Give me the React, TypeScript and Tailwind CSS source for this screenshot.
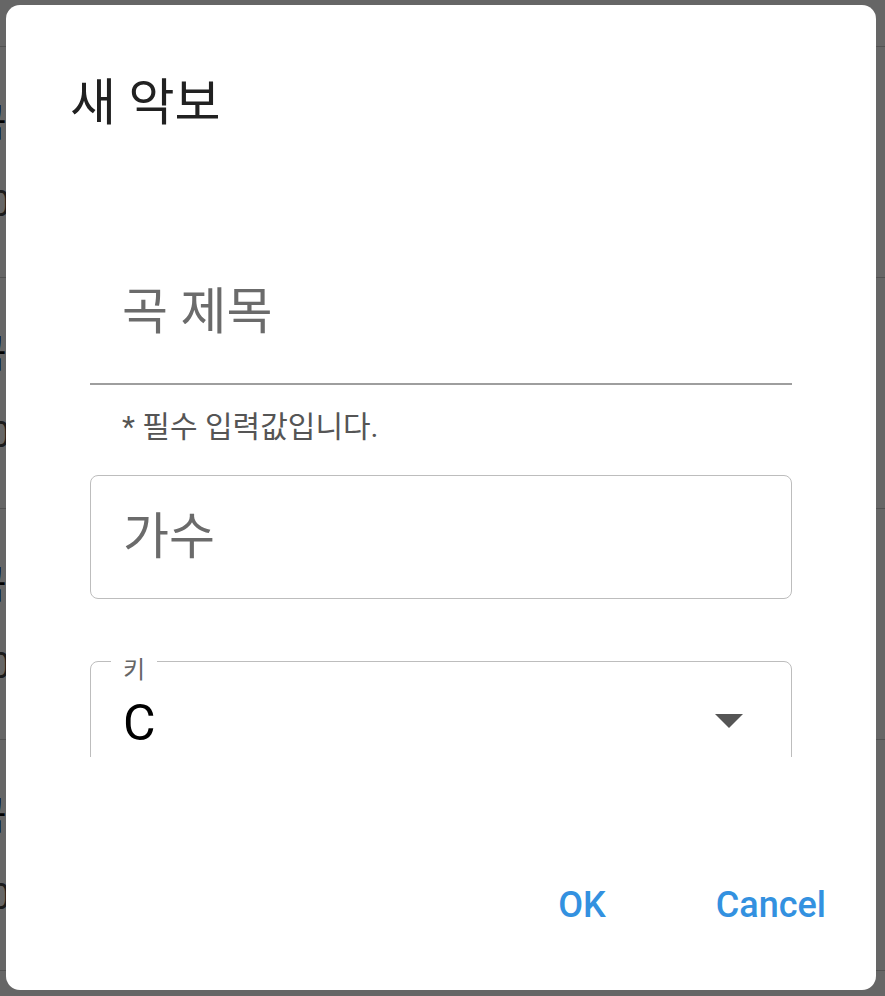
import { useState } from "react";

const font = { fontFamily: 'Roboto, "Noto Sans CJK KR", sans-serif' };

function BackgroundList() {
  const rows = ["곡 제목 1", "곡 제목 2", "곡 제목 3", "곡 제목 4"];
  return (
    <div className="flex flex-col bg-white" style={font}>
      <div className="h-[47px] border-b border-[#ccc]" />
      {rows.map((r, i) => (
        <div key={r} className="h-[231px] border-b border-[#ccc] flex flex-col justify-center gap-6 -ml-[30px]">
          <span className="text-[40px] text-black">{r}</span>
          <span className="text-[36px] text-[#444]">{i}0</span>
        </div>
      ))}
    </div>
  );
}

export default function App() {
  const [key] = useState("C");
  return (
    <div className="relative w-[885px] h-[996px] overflow-hidden" style={font}>
      <BackgroundList />
      <div className="absolute inset-0 bg-black/60" />

      {/* Dialog */}
      <div className="absolute left-[6px] top-[5px] w-[870px] h-[985px] bg-white rounded-[14px] flex flex-col">
        <h2 className="px-[64px] pt-[68px] text-[50px] leading-[60px] text-[#212121]">새 악보</h2>

        {/* Scrollable content */}
        <div className="mt-[24px] mx-[84px] h-[600px] shrink-0 overflow-hidden flex flex-col">
          {/* Title field (standard) */}
          <div className="h-[228px] shrink-0 flex flex-col justify-end border-b-2 border-[#9e9e9e]">
            <span className="pl-[32px] pb-[41px] text-[50px] leading-[60px] text-[#6b6b6b]">곡 제목</span>
          </div>
          <p className="shrink-0 pl-[32px] mt-[24px] text-[30px] leading-[36px] text-[#555]">* 필수 입력값입니다.</p>

          {/* Singer field (outlined) */}
          <div className="shrink-0 mt-[30px] h-[124px] rounded-[8px] border border-[#bdbdbd] flex items-center pl-[32px]">
            <span className="text-[50px] leading-[60px] text-[#6b6b6b]">가수</span>
          </div>

          {/* Key select (outlined) */}
          <div className="relative shrink-0 mt-[62px] h-[124px] rounded-[8px] border border-[#bdbdbd] flex items-center pl-[32px] pr-[48px]">
            <span className="absolute left-[20px] -top-[4px] bg-white px-[12px] text-[24px] leading-[24px] text-[#666]">키</span>
            <span className="flex-1 text-[50px] leading-[60px] text-black">{key}</span>
            <svg width="28" height="14" viewBox="0 0 28 14" className="mt-[-4px]">
              <path d="M0 0 L28 0 L14 14 Z" fill="#555" />
            </svg>
          </div>
        </div>

        {/* Actions */}
        <div className="flex-1 flex items-center justify-end pr-[34px] gap-[78px] pt-[63px]">
          <button className="px-[16px] text-[36px] font-medium text-[#3391e0] leading-[44px]">OK</button>
          <button className="px-[16px] text-[36px] font-medium text-[#3391e0] leading-[44px]">Cancel</button>
        </div>
      </div>
    </div>
  );
}
